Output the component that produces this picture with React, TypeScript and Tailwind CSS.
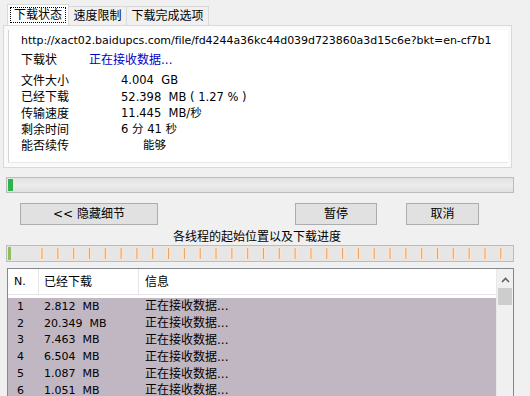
import React from "react";

const F = { fontFamily: '"DejaVu Sans", "Noto Sans CJK SC", sans-serif' };

const rows = [
  ["1", "2.812 MB"],
  ["2", "20.349 MB"],
  ["3", "7.463 MB"],
  ["4", "6.504 MB"],
  ["5", "1.087 MB"],
  ["6", "1.051 MB"],
];

function Ticks() {
  const xs: number[] = [];
  for (let i = 0; i < 30; i++) xs.push(34.5 + i * 15.82);
  return (
    <svg width="505" height="15" className="block">
      <rect x="1" y="1" width="3" height="13" fill="#8fbf5a" />
      {xs.map((x, i) => (
        <g key={i}>
          <rect x={x - 1.5} y="1" width="4" height="13" fill="#fbe3cc" />
          <rect x={x} y="2" width="1" height="11" fill="#e8a060" />
        </g>
      ))}
    </svg>
  );
}

export default function App() {
  return (
    <div
      className="w-[530px] h-[396px] bg-[#f0f0f0] overflow-hidden text-[12px] text-[#000] leading-none"
      style={F}
    >
      {/* tabs */}
      <div className="flex pl-[7px] pt-[4px] h-[25px] items-end">
        <div className="w-[62px] h-[21px] px-[2px] border border-b-0 border-[#d9d9d9] bg-white flex items-center">
          <span className="border border-dotted border-black w-full h-[16px] flex items-center justify-center">下载状态</span>
        </div>
        <div className="w-[58px] h-[19px] border border-b-0 border-l-0 border-[#d9d9d9] bg-[#f0f0f0] flex items-center justify-center">速度限制</div>
        <div className="w-[82px] h-[19px] border border-b-0 border-l-0 border-[#d9d9d9] bg-[#f0f0f0] flex items-center justify-center">下载完成选项</div>
      </div>
      {/* panel */}
      <div className="ml-[3px] w-[509px] h-[143px] border border-[#d9d9d9] bg-[#fafafa] pl-[4px] pr-[3px] pt-[4px] pb-[4px]">
        <div className="h-full bg-white border-l border-[#d4d4d4] border-b border-b-[#e8e8e8] pl-[12px] pt-[5px]">
          <div className="text-[11px] h-[14px] tracking-[-0.05px]">
            http://xact02.baidupcs.com/file/fd4244a36kc44d039d723860a3d15c6e?bkt=en-cf7b1
          </div>
          <div className="flex h-[14px] mt-[4px] items-center">
            <span className="w-[68px]">下载状</span>
            <span className="text-[#0000c8]">正在接收数据...</span>
          </div>
          <div className="mt-[6px] flex flex-col">
            {[
              ["文件大小", "4.004  GB"],
              ["已经下载", "52.398  MB ( 1.27 % )"],
              ["传输速度", "11.445  MB/秒"],
              ["剩余时间", "6 分 41 秒"],
              ["能否续传", "      能够"],
            ].map(([a, b]) => (
              <div key={a} className="flex h-[16.25px] items-center">
                <span className="w-[100px]">{a}</span>
                <span className="whitespace-pre text-[11.5px]">{b}</span>
              </div>
            ))}
          </div>
        </div>
      </div>
      {/* progress */}
      <div className="ml-[6px] mt-[9px] w-[508px] h-[16px] border border-[#bcbcbc] bg-gradient-to-b from-[#e2e2e2] via-[#ececec] to-[#e0e0e0] p-[1px]">
        <div className="w-[5px] h-full bg-[#2fb24a]" />
      </div>
      {/* buttons */}
      <div className="flex mt-[10px] h-[22px]">
        <button className="ml-[20px] w-[138px] h-[22px] border border-[#adadad] bg-[#e1e1e1] text-[12px] flex items-center justify-center" style={F}>
          &lt;&lt; 隐藏细节
        </button>
        <button className="ml-[137px] w-[82px] h-[22px] border border-[#adadad] bg-[#e1e1e1] text-[12px] flex items-center justify-center" style={F}>
          暂停
        </button>
        <button className="ml-[29px] w-[73px] h-[22px] border border-[#adadad] bg-[#e1e1e1] text-[12px] flex items-center justify-center" style={F}>
          取消
        </button>
      </div>
      <div className="h-[20px] flex items-center justify-center pr-[16px] pt-[4px]">各线程的起始位置以及下载进度</div>
      {/* thread bar */}
      <div className="ml-[6px] w-[508px] h-[17px] border border-[#bcbcbc] bg-[#e6e6e6]">
        <Ticks />
      </div>
      {/* list */}
      <div className="ml-[7px] mt-[6px] w-[507px] h-[140px] border border-[#828790] bg-white flex">
        <div className="flex-1 flex flex-col">
          <div className="h-[26px] flex items-center border-b border-[#e5e5e5]">
            <span className="w-[31px] pl-[6px] text-[11px] border-r border-[#e5e5e5] h-full flex items-center">N.</span>
            <span className="w-[100px] pl-[5px] border-r border-[#e5e5e5] h-full flex items-center">已经下载</span>
            <span className="pl-[6px]">信息</span>
          </div>
          <div className="bg-[#c1b7c3] flex-1 mt-[3px]">
            {rows.map(([n, s]) => (
              <div key={n} className="flex h-[16.8px] items-center">
                <span className="w-[31px] pl-[9px] text-[11px]">{n}</span>
                <span className="w-[100px] pl-[5px] text-[11px] whitespace-pre">{s.replace(" MB", "  MB")}</span>
                <span className="pl-[6px]">正在接收数据...</span>
              </div>
            ))}
          </div>
        </div>
        <div className="w-[17px] bg-[#f0f0f0] flex flex-col border-l border-[#e8e8e8]">
          <div className="h-[17px] mt-[2px] flex items-center justify-center">
            <svg width="9" height="6" viewBox="0 0 9 6">
              <path d="M1 5 L4.5 1.5 L8 5" stroke="#606060" strokeWidth="1.6" fill="none" />
            </svg>
          </div>
          <div className="mx-[1px] h-[17px] bg-[#cdcdcd]" />
        </div>
      </div>
    </div>
  );
}
